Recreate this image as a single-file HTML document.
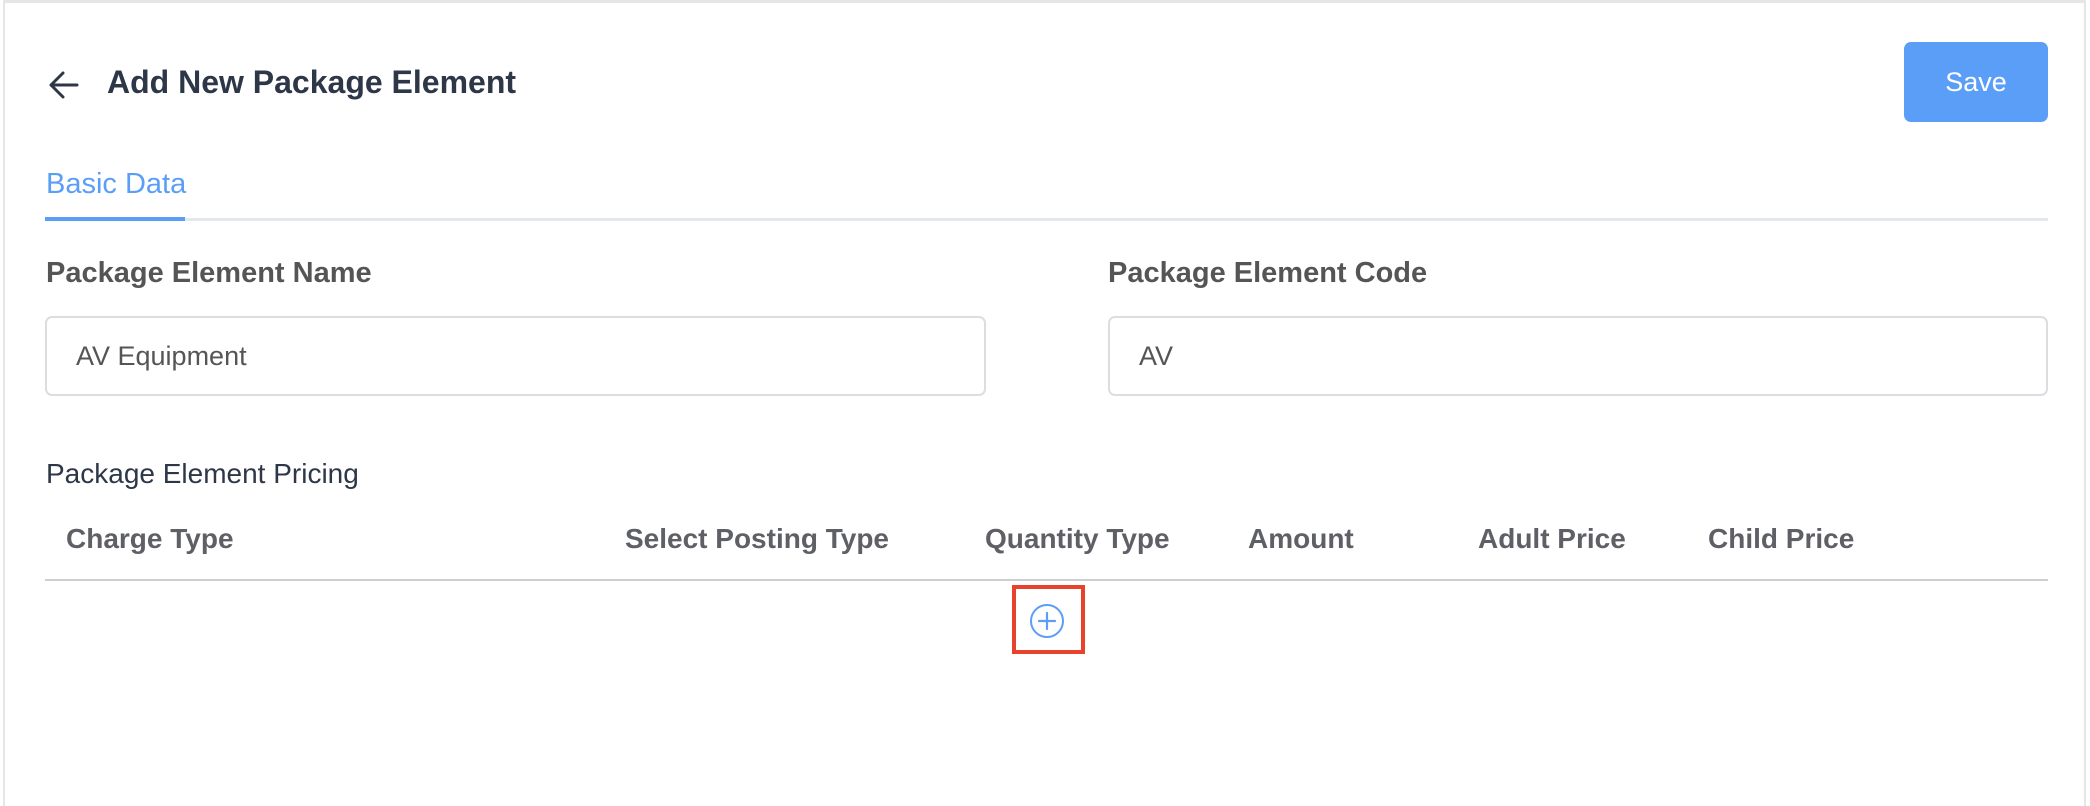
<!DOCTYPE html>
<html><head><meta charset="utf-8"><style>
*{margin:0;padding:0;box-sizing:border-box}
body{width:2090px;height:806px;background:#fff;font-family:"Liberation Sans",sans-serif;position:relative;overflow:hidden}
.frame{position:absolute;left:3px;top:0;width:2083px;height:806px;border-left:2px solid #e6e6e6;border-right:2px solid #e6e6e6;border-top:3px solid #e6e6e6}
.a{position:absolute;white-space:nowrap}
.title{left:107px;top:64px;font-size:32px;font-weight:bold;color:#2d3748}
.save{left:1904px;top:42px;width:144px;height:80px;background:#5b9ef7;border-radius:7px;color:#fff;font-size:27px;line-height:80px;text-align:center}
.tab{left:46px;top:168px;font-size:29px;color:#5b9ef7}
.tabline{left:45px;top:218px;width:2003px;height:3px;background:#e4e7ec}
.tabact{left:45px;top:217px;width:140px;height:4px;background:#5b9ef7}
.lbl{top:257px;font-size:29px;font-weight:bold;color:#555}
.inp{top:316px;height:80px;border:2px solid #dcdde0;border-radius:7px;font-size:27px;color:#555;padding-left:29px;line-height:76px}
.pr{left:46px;top:458px;font-size:28px;color:#2d3748}
.h{top:523px;font-size:28px;font-weight:bold;color:#5f6066}
.rule{left:45px;top:579px;width:2003px;height:2px;background:#cfcfcf}
.red{left:1012px;top:585px;width:73px;height:69px;border:4px solid #e8412c}
</style></head><body>
<div class="frame"></div>
<svg class="a" style="left:47px;top:69px" width="34" height="32" viewBox="0 0 34 32"><path d="M30 16H5M16 4L4 16l12 12" fill="none" stroke="#2d3748" stroke-width="3" stroke-linecap="round" stroke-linejoin="round"/></svg>
<div class="a title">Add New Package Element</div>
<div class="a save">Save</div>
<div class="a tab">Basic Data</div>
<div class="a tabline"></div>
<div class="a tabact"></div>
<div class="a lbl" style="left:46px">Package Element Name</div>
<div class="a lbl" style="left:1108px">Package Element Code</div>
<div class="a inp" style="left:45px;width:941px">AV Equipment</div>
<div class="a inp" style="left:1108px;width:940px">AV</div>
<div class="a pr">Package Element Pricing</div>
<div class="a h" style="left:66px">Charge Type</div>
<div class="a h" style="left:625px">Select Posting Type</div>
<div class="a h" style="left:985px">Quantity Type</div>
<div class="a h" style="left:1248px">Amount</div>
<div class="a h" style="left:1478px">Adult Price</div>
<div class="a h" style="left:1708px">Child Price</div>
<div class="a rule"></div>
<div class="a red"></div>
<svg class="a" style="left:1029px;top:603px" width="36" height="36" viewBox="0 0 36 36"><circle cx="18" cy="18" r="16" fill="none" stroke="#5b9ef7" stroke-width="2"/><path d="M18 10v16M10 18h16" stroke="#5b9ef7" stroke-width="2.2" stroke-linecap="round"/></svg>
</body></html>
